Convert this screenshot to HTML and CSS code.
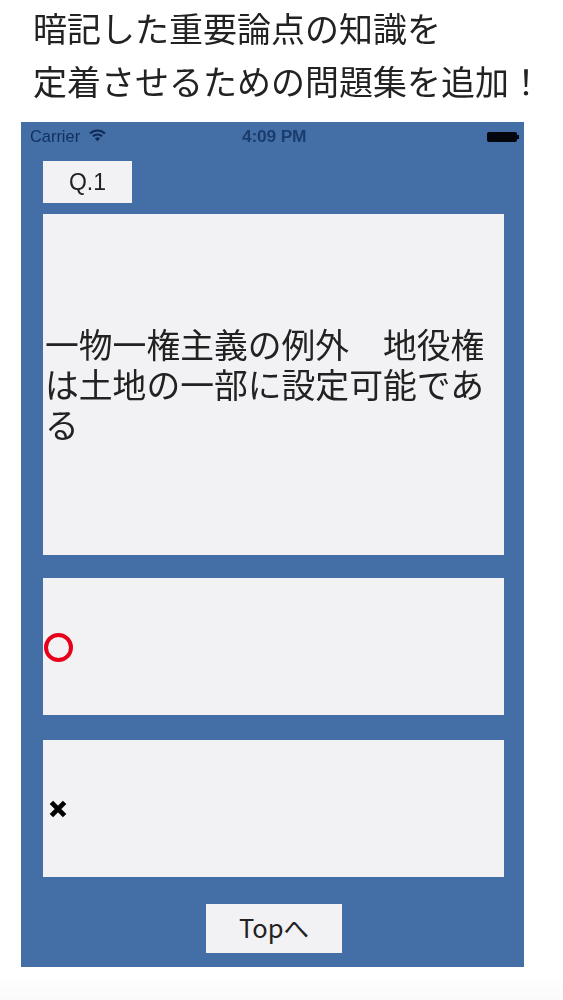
FILE: index.html
```html
<!DOCTYPE html>
<html lang="ja">

<head>
    <meta charset="UTF-8">
    <title>問題集</title>
    <link rel="stylesheet" href="styles.css">
</head>

<body>

    <header class="headline">
        <p>暗記した重要論点の知識を</p>
        <p>定着させるための問題集を追加！</p>
    </header>

    <main class="phone">
        <div class="statusbar">
            <div class="status-left">
                <span>Carrier</span>
                <svg class="wifi" width="17" height="13" viewBox="0 0 16 12">
                    <path d="M1 4.2 A10 10 0 0 1 15 4.2" fill="none" stroke="#0f2a57" stroke-width="2"/>
                    <path d="M3.6 6.8 A6.4 6.4 0 0 1 12.4 6.8" fill="none" stroke="#0f2a57" stroke-width="2"/>
                    <path d="M8 11.5 L5.6 8.8 A3.4 3.4 0 0 1 10.4 8.8 Z" fill="#0f2a57"/>
                </svg>
            </div>
            <span class="status-time">4:09 PM</span>
            <div class="battery"></div>
        </div>

        <div class="qnum">Q.1</div>

        <section class="question">一物一権主義の例外　地役権は土地の一部に設定可能である</section>

        <section class="answer answer-o">
            <div class="mark-o"></div>
        </section>

        <section class="answer answer-x">
            <svg class="mark-x" width="22" height="22" viewBox="0 0 20 20">
                <path d="M4 4 L16 16 M16 4 L4 16" stroke="#000" stroke-width="4.4" fill="none"/>
            </svg>
        </section>

        <div class="bottom">
            <div class="topbtn">Topへ</div>
        </div>
    </main>

</body></html>
```

FILE: styles.css
```css
* {
    margin: 0px;
    padding: 0px;
    box-sizing: border-box;
}

body {
    width: 563px;
    height: 1000px;
    overflow: hidden;
    background: linear-gradient(#fff 975px, #fafafa);
    font-family: "Noto Sans CJK JP", "Liberation Sans", sans-serif;
    color: #222;
    filter: blur(0.4px);
}

.headline {
    height: 122px;
    padding: 1px 0 0 33px;
    font-size: 34px;
    line-height: 53px;
    white-space: nowrap;
}

.phone {
    width: 503px;
    height: 845px;
    margin-left: 21px;
    padding: 0 20px 0 22px;
    background: #446ea6;
    display: flex;
    flex-direction: column;
}

.statusbar {
    height: 28px;
    margin: 0 -15px 0 -13px;
    padding-top: 1px;
    display: flex;
    align-items: center;
    position: relative;
    font-family: "Liberation Sans", sans-serif;
    font-size: 16.4px;
    color: #10305f;
}

.status-left {
    display: flex;
    align-items: center;
    gap: 9px;
}

.wifi {
    margin-top: -3px;
}

.status-time {
    position: absolute;
    left: 212px;
    font-size: 17.4px;
    font-weight: bold;
    letter-spacing: -0.2px;
    opacity: 0.8;
}

.battery {
    width: 30px;
    height: 10px;
    margin: 0 2px 0 auto;
    background: #05070f;
    border-radius: 2px;
    position: relative;
}

.battery::after {
    content: "";
    position: absolute;
    top: 3px;
    right: -2px;
    width: 2px;
    height: 4px;
    background: #05070f;
}

.qnum {
    width: 89px;
    height: 42px;
    margin-top: 11px;
    background: #f2f2f4;
    display: flex;
    align-items: center;
    justify-content: center;
    font-family: "Liberation Sans", sans-serif;
    font-size: 23px;
}

.question {
    height: 341px;
    margin-top: 11px;
    padding: 0 0 2px 2px;
    background: #f2f2f4;
    display: flex;
    align-items: center;
    font-size: 33.8px;
    line-height: 40px;
}

.answer {
    height: 137px;
    background: #f2f2f4;
    display: flex;
    align-items: center;
}

.answer-o {
    margin-top: 23px;
}

.answer-x {
    margin-top: 25px;
}

.mark-o {
    width: 29px;
    height: 29px;
    margin: 1px 0 0 1px;
    border: 4px solid #e8001a;
    border-radius: 50%;
}

.mark-x {
    margin: 1px 0 0 4px;
}

.bottom {
    flex: 1;
    display: flex;
    justify-content: center;
    padding: 27px 0 0 1px;
}

.topbtn {
    width: 136px;
    height: 49px;
    padding-bottom: 4px;
    background: #f2f2f4;
    display: flex;
    align-items: center;
    justify-content: center;
    font-size: 25.5px;
}
```
